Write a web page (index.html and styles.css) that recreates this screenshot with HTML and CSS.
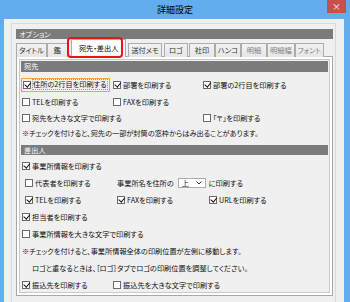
FILE: index.html
```html
<!DOCTYPE html>
<html lang="ja">
<head>
    <meta charset="UTF-8">
    <title>詳細設定</title>
    <link rel="stylesheet" href="styles.css">
</head>
<body>
    <div class="win">
        <div class="title">詳細設定<div class="close">×</div></div>
        <div class="client">
            <div class="frame">
                <div class="bar">オプション</div>
                <div class="tabs">
                    <div class="tab">タイトル</div>
                    <div class="tab k">鑑</div>
                    <div class="tab sel-tab">宛先・差出人</div>
                    <div class="tab gap">送付メモ</div>
                    <div class="tab gap lg">ロゴ</div>
                    <div class="tab">社印</div>
                    <div class="tab">ハンコ</div>
                    <div class="tab dim">明細</div>
                    <div class="tab dim">明細幅</div>
                    <div class="tab dim">フォント</div>
                    <div class="mark"></div>
                </div>
                <div class="panel">
                    <div class="page">
                        <div class="bar">宛先</div>
                        <div class="sec sec1">
                            <div class="row grid3">
                                <div class="chk focus"><span class="cb on"></span><span class="ftxt">住所の2行目を印刷する</span></div>
                                <div class="chk"><span class="cb on"></span>部署を印刷する</div>
                                <div class="chk"><span class="cb on"></span>部署の2行目を印刷する</div>
                            </div>
                            <div class="row grid3">
                                <div class="chk"><span class="cb"></span>TELを印刷する</div>
                                <div class="chk"><span class="cb"></span>FAXを印刷する</div>
                            </div>
                            <div class="row grid3 short">
                                <div class="chk wide"><span class="cb"></span>宛先を大きな文字で印刷する</div>
                                <div class="chk"><span class="cb"></span>「〒」を印刷する</div>
                            </div>
                            <div class="row note1">※チェックを付けると、宛先の一部が封筒の窓枠からはみ出ることがあります。</div>
                        </div>
                        <div class="bar bar2">差出人</div>
                        <div class="sec sec2">
                            <div class="row">
                                <div class="chk"><span class="cb on"></span>事業所情報を印刷する</div>
                            </div>
                            <div class="row sub">
                                <div class="chk"><span class="cb"></span>代表者を印刷する</div>
                                <div class="pos">事業所名を住所の<span class="select">上<svg width="6" height="4" viewBox="0 0 6 4"><path d="M0.5 0.5 L3 3 L5.5 0.5" fill="none" stroke="#333" stroke-width="1"/></svg></span>に印刷する</div>
                            </div>
                            <div class="row sub">
                                <div class="chk"><span class="cb on"></span>TELを印刷する</div>
                                <div class="chk"><span class="cb on"></span>FAXを印刷する</div>
                                <div class="chk"><span class="cb on"></span>URLを印刷する</div>
                            </div>
                            <div class="row">
                                <div class="chk"><span class="cb on"></span>担当者を印刷する</div>
                            </div>
                            <div class="row">
                                <div class="chk"><span class="cb"></span>事業所情報を大きな文字で印刷する</div>
                            </div>
                            <div class="row">※チェックを付けると、事業所情報全体の印刷位置が左側に移動します。</div>
                            <div class="row indent">ロゴと重なるときは、［ロゴ］タブでロゴの印刷位置を調整してください。</div>
                            <div class="row grid3">
                                <div class="chk"><span class="cb on"></span>振込先を印刷する</div>
                                <div class="chk"><span class="cb"></span>振込先を大きな文字で印刷する</div>
                            </div>
                        </div>
                    </div>
                </div>
            </div>
        </div>
    </div>
</body>
</html>
```

FILE: styles.css
```css
*{
    margin:0;
    padding:0;
    box-sizing:border-box;
}
body{
    background:#62adef;
    font-family:"Noto Sans CJK JP","Noto Sans",sans-serif;
    font-size:7.2px;
    font-feature-settings:"palt";
    color:#111;
}
.win{
    width:350px;
    height:302px;
    overflow:hidden;
    display:flex;
    flex-direction:column;
}
.title{
    height:19px;
    position:relative;
    text-align:center;
    font-size:9px;
    line-height:20px;
    color:#000;
}
.close{
    position:absolute;
    right:4px;
    top:0;
    width:19px;
    height:13px;
    background:#c9504a;
    color:#fff;
    font-size:9px;
    line-height:13px;
}
.client{
    flex:1;
    margin:0 6px 0 4px;
    background:#f0f0f0;
    padding:4px 8px 0 7px;
}
.frame{
    height:282px;
    border:1px solid #d9d9d9;
    padding:5px 2px 0 4px;
}
.bar{
    height:10px;
    background:#7b7b7b;
    color:#fff;
    line-height:10px;
    padding-left:3px;
}
.tabs{
    position:relative;
    display:flex;
    align-items:flex-end;
    height:18px;
    margin-bottom:-1px;
}
.tab{
    flex:none;
    white-space:nowrap;
    height:14px;
    min-width:26px;
    line-height:13px;
    padding:0 2px;
    text-align:center;
    border:1px solid #acacac;
    border-bottom:0;
    background:linear-gradient(#f2f2f2,#e6e6e6);
    color:#333;
}
.k{
    min-width:21px;
}
.gap{
    margin-left:2px;
}
.lg{
    min-width:24px;
    margin-right:1px;
}
.dim{
    color:#808080;
}
.sel-tab{
    height:18px;
    line-height:16px;
    margin:0 0 0 3px;
    padding:0 7px;
    background:#fff;
    position:relative;
    z-index:1;
    color:#000;
}
.mark{
    position:absolute;
    left:51px;
    top:-2px;
    width:56px;
    height:21px;
    border:2.5px solid #e8141c;
    border-radius:4px;
    z-index:2;
}
.panel{
    height:240px;
    border:1px solid #a9a9a9;
    background:#fff;
    padding:2px;
}
.page{
    height:100%;
    border:1px solid #cacaca;
    background:#f0f0f0;
    padding:1px;
}
.page .bar{
    height:11px;
    line-height:11px;
}
.page .bar2{
    height:10px;
    line-height:10px;
    margin-top:4px;
}
.sec{
    padding-left:1px;
}
.sec1{
    padding-top:4px;
}
.sec2{
    padding-top:2px;
}
.row{
    height:17px;
    display:flex;
    align-items:center;
    white-space:nowrap;
}
.short{
    height:15px;
}
.note1{
    height:16px;
}
.grid3{
    display:grid;
    grid-template-columns:91px 90px 1fr;
}
.grid3 .wide{
    grid-column:span 2;
}
.sub{
    padding-left:3px;
    display:grid;
    grid-template-columns:92px 92px 1fr;
}
.sub .pos{
    grid-column:span 2;
}
.indent{
    padding-left:10px;
}
.chk{
    display:flex;
    align-items:center;
    height:12px;
}
.cb{
    width:8px;
    height:8px;
    border:1px solid #6a6a6a;
    background:#fff;
    margin-right:2px;
    flex:none;
    position:relative;
}
.cb.on::after{
    content:"";
    position:absolute;
    left:1.5px;
    top:-0.5px;
    width:2.5px;
    height:4.5px;
    border:solid #111;
    border-width:0 1.5px 1.5px 0;
    transform:rotate(40deg);
}
.focus{
    justify-self:start;
    margin-left:-1px;
    padding:0 2px 0 1px;
    height:14px;
    border:1px solid #f0a83c;
}
.ftxt{
    outline:1px dotted #999;
    line-height:9px;
}
.pos{
    display:flex;
    align-items:center;
}
.select{
    display:inline-flex;
    align-items:center;
    justify-content:space-between;
    width:28px;
    height:10px;
    margin:0 3px 0 4px;
    padding:0 3px 0 3px;
    border:1px solid #acacac;
    background:#fff;
}
```
